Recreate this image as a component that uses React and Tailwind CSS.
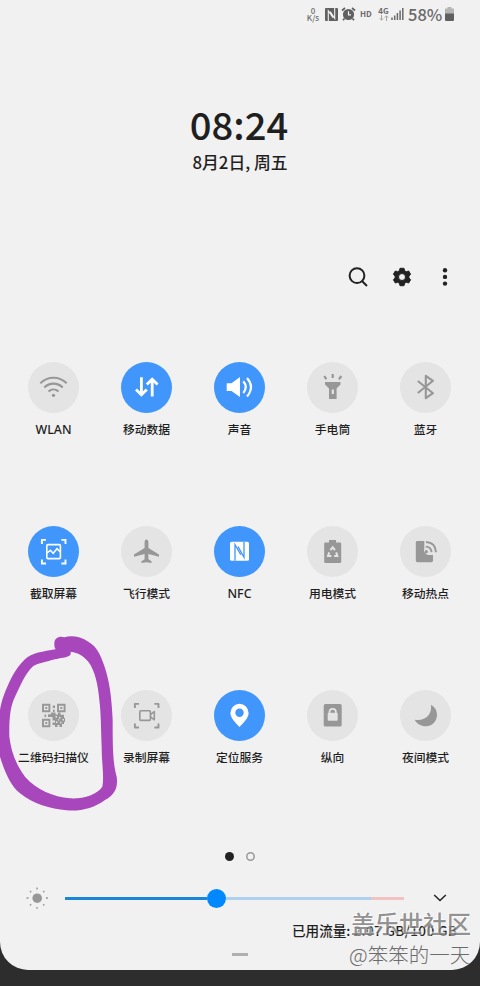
import React from 'react';

const G = '#979797';

function Wifi() {
  return (
    <g fill="none" stroke={G} strokeWidth="2.1">
      <path d="M12.3 21.2C20 14 31 14 38.7 21.2" />
      <path d="M16.3 25.4C21.5 20.3 29.5 20.3 34.7 25.4" />
      <path d="M20.5 29.6C23.5 26.8 27.5 26.8 30.5 29.6" />
      <circle cx="25.5" cy="33.3" r="1.6" fill={G} stroke="none" />
    </g>
  );
}
function Data() {
  return (
    <g fill="none" stroke="#fff" strokeWidth="2.8">
      <path d="M20.4 15.2V32.6M15 27.4L20.4 32.8L25.8 27.4" />
      <path d="M31.2 34.4V17.2M25.8 22.6L31.2 17.2L36.6 22.6" />
    </g>
  );
}
function Sound() {
  return (
    <g>
      <path fill="#fff" d="M12.7 21.3H17.5L26 15V35L17.5 29H12.7Z" />
      <path fill="none" stroke="#fff" strokeWidth="2.2" d="M29.3 19.3Q34.2 25 29.3 31M33 16Q41 25 33 34.5" />
    </g>
  );
}
function Torch() {
  return (
    <g fill={G}>
      <path d="M18 20H33.5V22.5L29.6 26.5V37H22V26.5L18 22.5Z" />
      <rect x="24.7" y="27.5" width="2.2" height="4.5" fill="#e4e4e4" />
      <path fill="none" stroke={G} strokeWidth="2.2" d="M25.7 12V16M17.3 14L19.3 17.3M34.3 14L32 17.3" />
    </g>
  );
}
function Bluetooth() {
  return <path fill="none" stroke={G} strokeWidth="2.1" strokeLinejoin="round" d="M17.8 19L33 31.2L25.8 36.2V13.8L33 18.8L17.8 31" />;
}
function Corners({ c }) {
  return <path fill="none" stroke={c} strokeWidth="1.9" d="M13.9 18V13.9H18M33.4 13.9H37.5V18M37.5 33.4V37.5H33.4M18 37.5H13.9V33.4" />;
}
function Capture() {
  return (
    <g fill="none" stroke="#fff" strokeWidth="1.6">
      <Corners c="#fff" />
      <rect x="18.8" y="18.6" width="13.6" height="14" rx="1.2" />
      <path d="M19 27L22.3 24.3L25.2 27.2L29 22.7L32.3 26" />
    </g>
  );
}
function Plane() {
  return <path fill={G} d="M25.5 13.5C27 13.5 27.4 15 27.4 17V22L38 28.5V30.8L27.4 28V33.2L30.5 35.3V37L25.5 36.3L20.5 37V35.3L23.6 33.2V28L13 30.8V28.5L23.6 22V17C23.6 15 24 13.5 25.5 13.5Z" />;
}
function Nfc() {
  return (
    <g>
      <path fill="#fff" d="M17.6 15.8H33.4Q35 15.8 35 17.4V33.2Q35 34.8 33.4 34.8H17.6Q16 34.8 16 33.2V17.4Q16 15.8 17.6 15.8Z" />
      <path fill="none" stroke="#4196fc" strokeWidth="1.3" d="M21 34.8V18.6L26.8 28.8M24 20.6L30 31.2V15.8" />
    </g>
  );
}
function Power() {
  return (
    <g>
      <path fill={G} d="M22 14H29V16.4H33Q34.2 16.4 34.2 17.6V35.7Q34.2 37 33 37H18.4Q17.2 37 17.2 35.7V17.6Q17.2 16.4 18.4 16.4H22Z" />
      <path fill="none" stroke="#e4e4e4" strokeWidth="2" d="M23.4 24.2L25.7 21.3L28 24.2M29.2 26.4L30.4 30H27.2M24.4 30H21L22.2 26.4" />
    </g>
  );
}
function Hotspot() {
  return (
    <g>
      <path fill={G} d="M17 15H24.3V22.5A5 5 0 0 0 28 29H33V34.5Q33 36.2 31.5 36.2H17.3Q15.8 36.2 15.8 34.5V16.5Q15.8 15 17 15Z" />
      <path fill="none" stroke={G} strokeWidth="1.9" d="M25.8 20.6Q31 20.8 31.6 26.2M26 16Q35.6 16.5 36 26.2" />
      <circle cx="26.3" cy="25.7" r="1.6" fill={G} />
    </g>
  );
}
function Qr() {
  return (
    <g fill={G}>
      <path fill="none" stroke={G} strokeWidth="1.9" d="M15 14.8H21.4V21.2H15ZM30 14.8H36.6V21.2H30ZM15 29.8H21.4V36.2H15Z" />
      <path d="M17.3 17H19.2V19H17.3ZM32.3 17H34.3V19H32.3ZM17.3 32H19.2V34H17.3ZM24.7 15.5H27V18H24.7ZM25 19.5H26.6V22H25ZM16.5 24.5H18.2V27H16.5ZM20 24.2H23V22.5H27.5V24.5H30V22.5H32.5V24.7H36V28H37V32H36V34H34V37H31.5V35H29.5V37H27V35H24.5V32.5H27V30.5H24.5V27H20Z" />
      <path fill="#e4e4e4" d="M27.5 26H29V27.4H27.5ZM31 27H32.5V28.5H31ZM28 31.5H29.5V33H28ZM32 31.8H33.4V33.3H32ZM34.5 29H36V30.4H34.5ZM30 29.2H31.2V30.5H30Z" />
    </g>
  );
}
function Recorder() {
  return (
    <g fill="none" stroke={G} strokeWidth="1.6" strokeLinejoin="round">
      <Corners c={G} />
      <rect x="18.8" y="20.8" width="10.6" height="9.6" rx="1" />
      <path d="M29.5 24.6L33.3 21.5V29.8L29.5 26.8" />
    </g>
  );
}
function Pin() {
  return <path fill="#fff" fillRule="evenodd" d="M25.5 13.8A9.1 9.1 0 0 0 16.4 22.9C16.4 28 22 33 25.5 37C29 33 34.6 28 34.6 22.9A9.1 9.1 0 0 0 25.5 13.8ZM25.5 18.6A4.2 4.2 0 1 1 25.5 27A4.2 4.2 0 1 1 25.5 18.6Z" />;
}
function Portrait() {
  return (
    <g>
      <rect x="16.7" y="14" width="18" height="22.6" rx="1.7" fill={G} />
      <rect x="20.7" y="22.8" width="10" height="8" rx="1" fill="#e4e4e4" />
      <path fill="none" stroke="#e4e4e4" strokeWidth="1.7" d="M22.5 23V22A3.2 3.2 0 0 1 28.9 22V23" />
    </g>
  );
}
function Moon() {
  return <path fill={G} d="M31 14.8C35 17 37 20.5 37 25A11.2 11.2 0 0 1 25.8 36.2C21 36.2 17 34 14.6 29.7C25 31.5 32.2 25 31 14.8Z" />;
}

const TILES = [
  ['WLAN', false, Wifi],
  ['移动数据', true, Data],
  ['声音', true, Sound],
  ['手电筒', false, Torch],
  ['蓝牙', false, Bluetooth],
  ['截取屏幕', true, Capture],
  ['飞行模式', false, Plane],
  ['NFC', true, Nfc],
  ['用电模式', false, Power],
  ['移动热点', false, Hotspot],
  ['二维码扫描仪', false, Qr],
  ['录制屏幕', false, Recorder],
  ['定位服务', true, Pin],
  ['纵向', false, Portrait],
  ['夜间模式', false, Moon],
];

function Tile({ label, on, Icon }) {
  const latin = /^[A-Z]+$/.test(label);
  return (
    <div className="flex flex-col items-center">
      <div className={`size-[51px] rounded-full ${on ? 'bg-[#4196fc]' : 'bg-[#e4e4e4]'}`}>
        <svg viewBox="0 0 51 51" className="size-full"><Icon /></svg>
      </div>
      <span className={`mt-[7px] leading-5 font-medium whitespace-nowrap ${latin ? "font-['Noto_Sans',sans-serif] text-[12.4px]" : "font-[Roboto,'Noto_Sans_CJK_SC',sans-serif] text-[11.8px]"}`}>{label}</span>
    </div>
  );
}

function StatusBar() {
  return (
    <header className="flex h-7 items-center pl-[306px] text-[#6a6a6a]">
      <div className="flex w-[14px] flex-col items-center text-[8px] font-medium">
        <span className="h-[7px] leading-[7px]">0</span>
        <span className="h-[8px] leading-[8px]">K/s</span>
      </div>
      <svg viewBox="0 0 13 13" className="ml-[5px] h-[13px] w-[13px]">
        <rect width="13" height="13" rx="1" fill="#606060" />
        <path d="M3.3 13V2.8L8 9.6M5.2 3.6L9.7 10.4V0" fill="none" stroke="#f1f1f1" strokeWidth="1.1" />
      </svg>
      <svg viewBox="0 0 15 14" className="ml-[3px] h-[14px] w-[15px]">
        <circle cx="7.5" cy="7.5" r="5.6" fill="#606060" />
        <path d="M1 3.5L4 1M14 3.5L11 1M3.5 11.5L2 13.3M11.5 11.5L13 13.3" stroke="#606060" strokeWidth="1.7" />
        <path d="M7.5 4.2V7.8H10" fill="none" stroke="#f1f1f1" strokeWidth="1.2" />
      </svg>
      <span className="ml-[4px] w-[13px] text-[8px] leading-none font-bold">HD</span>
      <div className="ml-[5px] flex w-[11px] flex-col items-center">
        <span className="text-[8px] leading-[8px] font-bold">4G</span>
        <svg viewBox="0 0 10 6" className="h-[6px] w-[10px]">
          <path d="M2.5 0V5M.8 3.4L2.5 5.2L4.2 3.4M7.5 6V1M5.8 2.6L7.5.8L9.2 2.6" fill="none" stroke="#a5a5a5" />
        </svg>
      </div>
      <svg viewBox="0 0 13 12" className="ml-[2px] h-[12px] w-[13px]">
        <path d="M1 9.5V12M3.7 7.5V12M6.4 5V12M9.1 2.5V12M11.8 0V12" stroke="#6a6a6a" strokeWidth="1.5" />
      </svg>
      <span className="ml-[4px] w-[36px] text-[16.5px] leading-none font-medium">58%</span>
      <svg viewBox="0 0 9 14" className="ml-px h-[14px] w-[9px]">
        <path d="M2.5 0H6.5V1.5H9V7H0V1.5H2.5Z" fill="#b5b5b5" />
        <path d="M0 6.5H9V13Q9 14 8 14H1Q0 14 0 13Z" fill="#606060" />
      </svg>
    </header>
  );
}

export default function App() {
  return (
    <div className="relative h-[986px] w-[480px] overflow-hidden bg-[#2d2d2d] font-['Noto_Sans_CJK_SC',sans-serif] text-[#1f1f1f]">
      <main className="flex h-[970px] flex-col rounded-b-[28px] bg-[#f1f1f1]">
        <StatusBar />
        <section className="mt-[71px] flex h-[76px] flex-col items-center">
          <time className="-ml-[2px] text-[38.2px] leading-[50px] font-medium">08:24</time>
          <div className="text-[16.8px] leading-[26px] font-medium">8月2日, 周五</div>
        </section>
        <nav className="mt-[88px] flex h-7 items-center pl-[348px]">
          <svg viewBox="0 0 20 20" className="size-5">
            <path d="M14.2 14.2L19 19" stroke="#222" strokeWidth="2" />
            <circle cx="9" cy="8.6" r="7.4" fill="none" stroke="#222" strokeWidth="2" />
          </svg>
          <svg viewBox="0 0 20 20" className="ml-[24px] size-5">
            <path fillRule="evenodd" fill="#222" stroke="#222" strokeLinejoin="round" d="M8 1.3H12L12.6 3.7L14.3 4.7L16.7 4L18.6 7.3L16.9 9V11L18.6 12.7L16.7 16L14.3 15.3L12.6 16.3L12 18.7H8L7.4 16.3L5.7 15.3L3.3 16L1.4 12.7L3.1 11V9L1.4 7.3L3.3 4L5.7 4.7L7.4 3.7ZM10 6.5A3.5 3.5 0 1 0 10 13.5A3.5 3.5 0 1 0 10 6.5Z" />
          </svg>
          <svg viewBox="0 0 6 20" className="ml-[30px] h-5 w-[6px]" fill="#222">
            <circle cx="3" cy="3.2" r="2.2" /><circle cx="3" cy="9.9" r="2.2" /><circle cx="3" cy="16.6" r="2.2" />
          </svg>
        </nav>
        <section className="mt-[71px] ml-[7px] grid h-[489px] w-[465px] grid-cols-5 auto-rows-[164px]">
          {TILES.map(([label, on, Icon]) => <Tile key={label} label={label} on={on} Icon={Icon} />)}
        </section>
        <div className="flex h-[10px] items-center gap-3 pl-[225px]">
          <i className="size-[9px] rounded-full bg-[#222]" />
          <svg viewBox="0 0 9 9" className="size-[9px]">
            <circle cx="4.5" cy="4.5" r="3.7" fill="none" stroke="#999" strokeWidth="1.5" />
          </svg>
        </div>
        <div className="mt-[27px] flex h-5 items-center pl-[26px]">
          <svg viewBox="0 0 22 22" className="size-[22px]">
            <circle cx="11.2" cy="11.2" r="4.8" fill="#979797" />
            <path d="M11 .5V2.5M11 20V21.7M.5 11H2.5M20 11H22M4 4L5.2 5.2M17.2 17.2L18.4 18.4M4 18.4L5.2 17.2M17.2 5.2L18.4 4" stroke="#979797" strokeWidth="1.4" />
          </svg>
          <div className="ml-[17px] h-[3px] w-[142px] bg-[#1a86d8]" />
          <div className="size-[19px] rounded-full bg-[#0088ff]" />
          <div className="h-[3px] w-[145px] bg-[#add0ee]" />
          <div className="h-[3px] w-[33px] bg-[#f0c2c2]" />
          <svg viewBox="0 0 14 8" className="ml-[29px] h-2 w-[14px]">
            <path d="M1.2 1L7 6.5L12.8 1" fill="none" stroke="#222" strokeWidth="1.5" />
          </svg>
        </div>
        <div className="mt-[12px] h-5 pl-[292px] text-[13.6px] leading-5 font-medium whitespace-nowrap">已用流量: <span className="tracking-[0.32px]">2.07 GB/100 GB</span></div>
        <div className="mt-[13px] ml-[232px] h-[3px] w-4 bg-[#b0b0b0]" />
      </main>
      <svg viewBox="0 0 360 570" className="absolute top-[630px] left-0 h-[190px] w-[120px]">
        <path fill="#a846bb" fillRule="evenodd" d="M163 40C163 24 178 17 193 22C215 15 242 20 265 35C290 50 300 70 312 105C328 150 335 200 338 270C338 340 338 400 350 440C354 470 347 492 315 510C283 534 240 545 200 541C150 537 100 522 60 490C30 465 14 425 0 380C-8 330 -8 250 10 200C25 160 45 115 75 88C95 68 130 65 167 58C163 53 163 47 163 40ZM212 72C210 82 190 82 165 88C140 95 115 100 100 108C75 130 60 170 45 200C30 230 27 270 28 320C33 360 45 400 75 440C110 480 160 500 210 505C250 507 290 495 307 470C313 440 305 400 305 350C303 300 303 250 298 210C295 170 285 120 265 95C250 78 235 68 212 65Z" />
      </svg>
      <div className="absolute top-[908px] left-[351px] text-[24px] leading-[30px] font-medium whitespace-nowrap text-[#555555]/65 [text-shadow:-1px_-1px_1px_#ffffffc0,1px_1px_1px_#ffffff80]">盖乐世社区</div>
      <div className="absolute top-[941px] left-[349px] text-[20.5px] leading-[26px] font-light whitespace-nowrap text-[#6c6c6c]">@笨笨的一天</div>
    </div>
  );
}
